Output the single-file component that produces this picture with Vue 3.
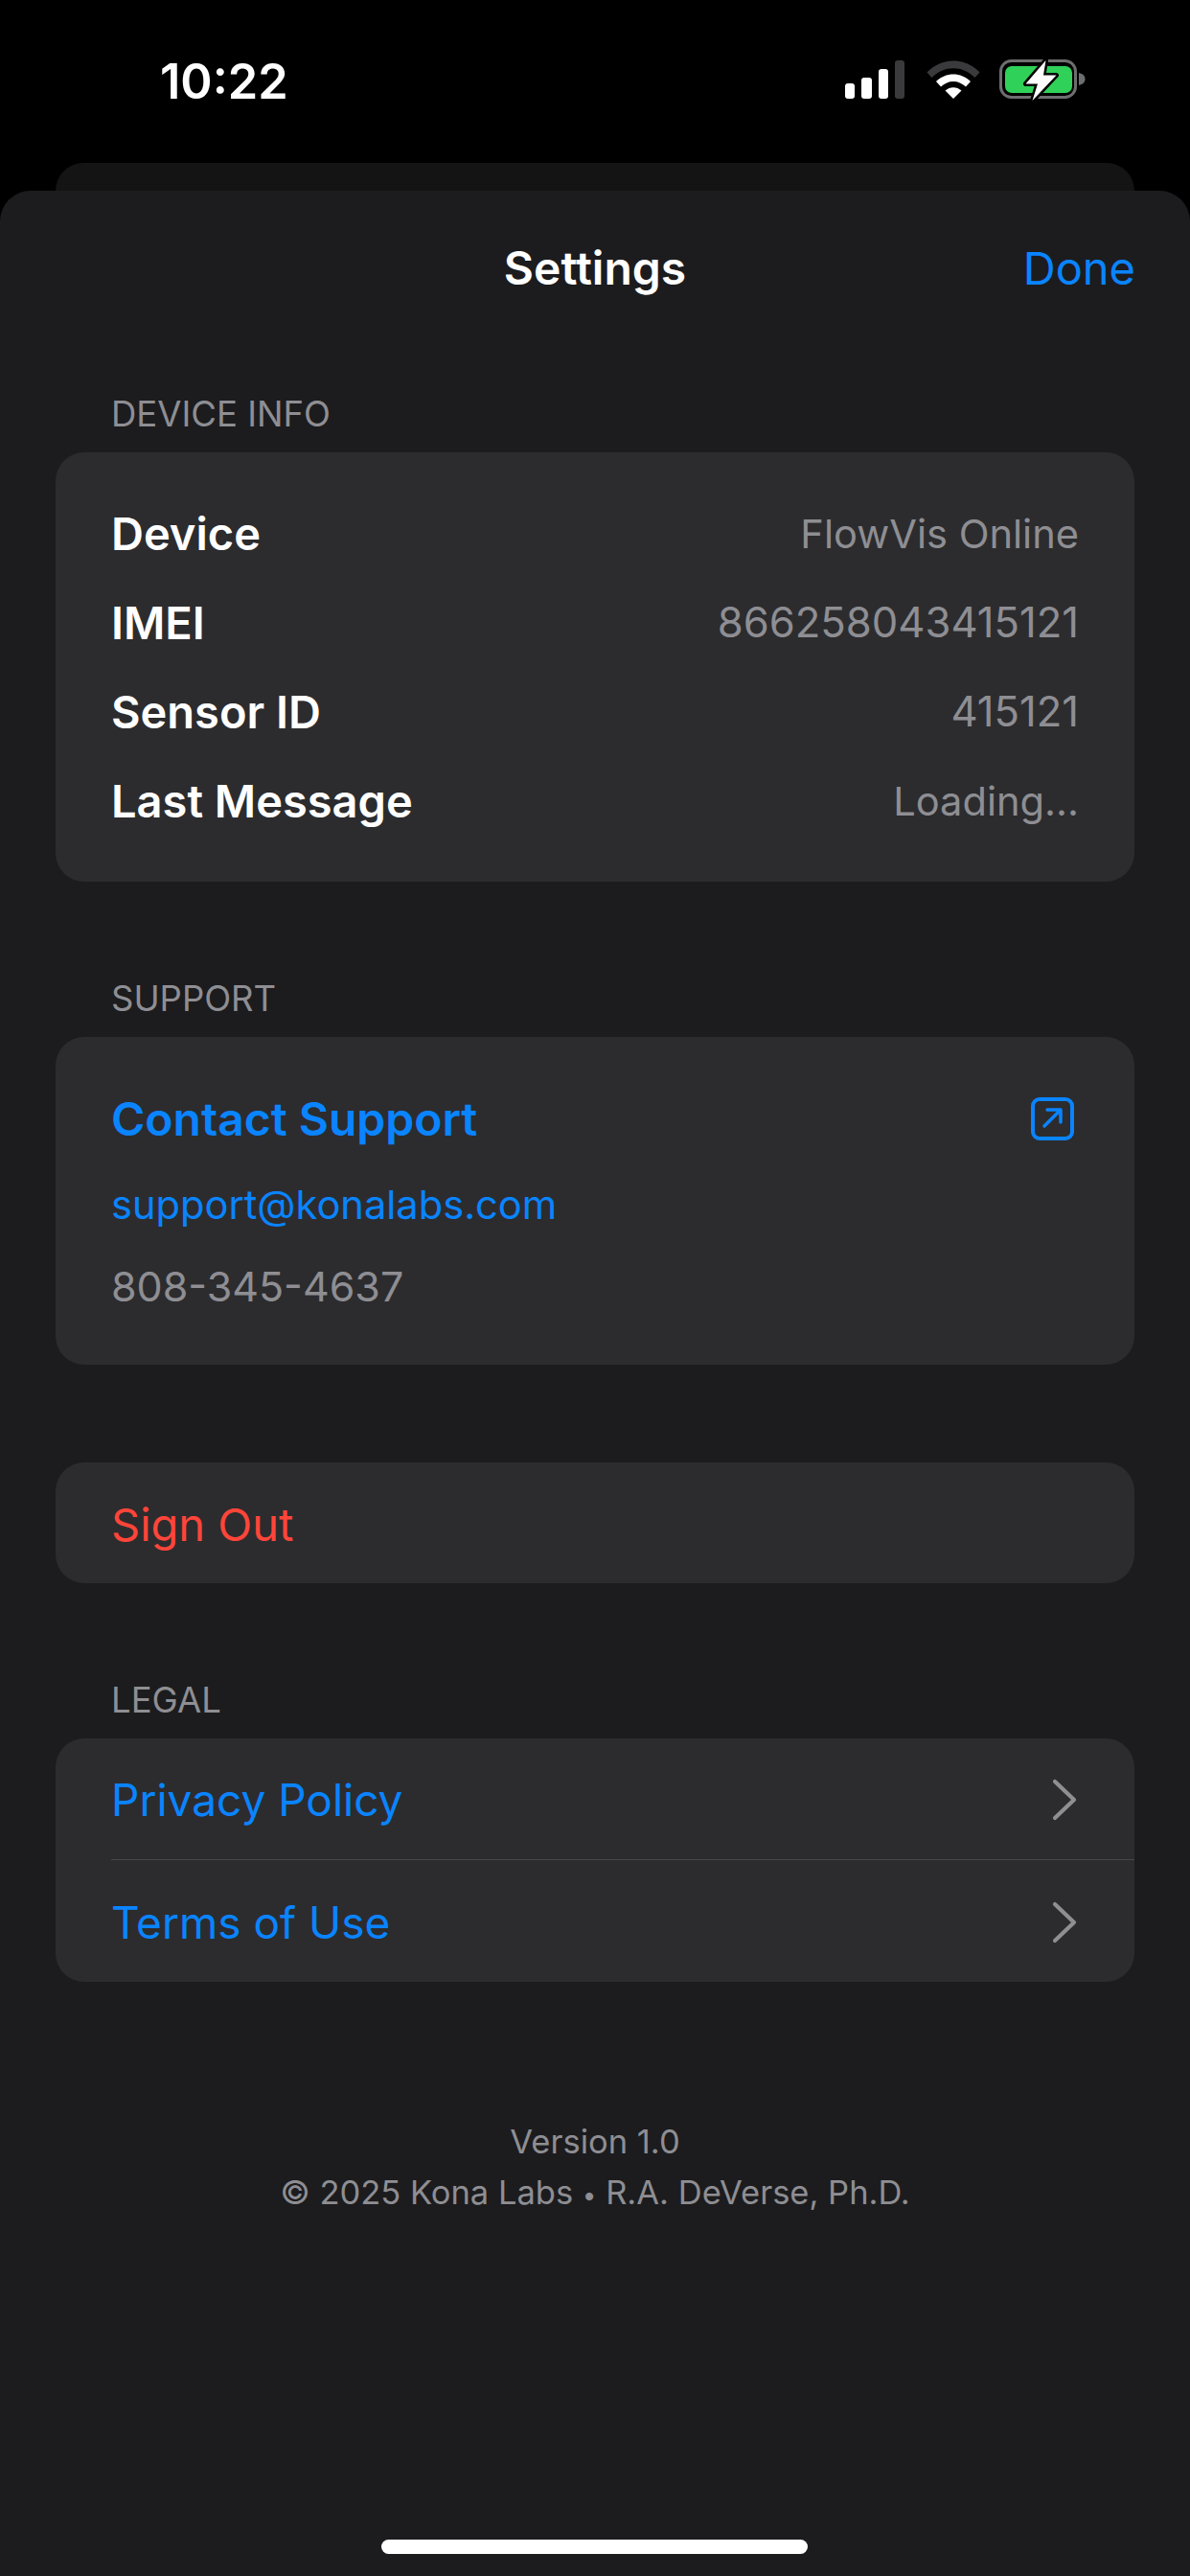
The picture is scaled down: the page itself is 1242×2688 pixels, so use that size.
<template>
  <div class="screen">
    <div class="status-bar">
      <span class="time">10:22</span>
      <div class="status-icons">
        <svg class="signal" width="62" height="40" viewBox="0 0 62 40">
          <rect x="0" y="24" width="10" height="16" rx="3" fill="#fff" />
          <rect x="17" y="18" width="11" height="22" rx="3" fill="#fff" />
          <rect x="35" y="9" width="10" height="31" rx="3" fill="#fff" />
          <rect x="52" y="0" width="10" height="40" rx="3" fill="#3a3a3c" />
        </svg>
        <svg class="wifi" width="56" height="40" viewBox="0 0 56 40">
          <path d="M0.5 12.5 C16 -3.5 40 -3.5 55.5 12.5 L50.5 18 C37.5 5 18.5 5 5.5 18 Z" fill="#3a3a3c" />
          <path d="M10 22 C20 12 36 12 46 22 L41 27.5 C33.5 20 22.5 20 15 27.5 Z" fill="#fff" />
          <path d="M19.5 31.5 C24.5 27 31.5 27 36.5 31.5 L28 40 Z" fill="#fff" />
        </svg>
        <svg class="battery" width="90" height="44" viewBox="0 0 90 44">
          <rect x="1.5" y="1.5" width="78" height="38" rx="11" fill="none" stroke="#6e6e70" stroke-width="3" />
          <rect x="6" y="7" width="70" height="28" rx="7" fill="#30d158" />
          <path d="M83 14 C87 15 89.5 17 89.5 20.5 C89.5 24 87 26 83 27 Z" fill="#6e6e70" />
          <path d="M48.5 1 L27.5 25.5 L40 25.5 L34.5 43 L59.5 16.5 L46 16.5 Z" fill="#fff" stroke="#000" stroke-width="5" stroke-linejoin="round" paint-order="stroke" />
        </svg>
      </div>
    </div>

    <div class="back-card"></div>

    <div class="sheet">
      <header class="nav">
        <span class="nav-title">Settings</span>
        <span class="nav-done">Done</span>
      </header>

      <h2 class="section-label">DEVICE INFO</h2>
      <section class="card info-card">
        <div v-for="row in infoRows" :key="row.label" class="info-row">
          <span class="info-label">{{ row.label }}</span>
          <span :class="['info-value', { numeric: row.numeric }]">{{ row.value }}</span>
        </div>
      </section>

      <h2 class="section-label spaced">SUPPORT</h2>
      <section class="card support-card">
        <div class="support-head">
          <span class="support-title">Contact Support</span>
          <svg class="open-icon" width="45" height="45" viewBox="0 0 45 45" fill="none" stroke="#0a84ff" stroke-linecap="round" stroke-linejoin="round">
            <rect x="2" y="2" width="41" height="41" rx="7" stroke-width="4" />
            <path d="M14 30 L31 13 M17 13 L31 13 L31 26" stroke-width="3.5" />
          </svg>
        </div>
        <a class="support-mail">support@konalabs.com</a>
        <span class="support-phone">808-345-4637</span>
      </section>

      <section class="card signout-card">
        <span class="signout">Sign Out</span>
      </section>

      <h2 class="section-label spaced">LEGAL</h2>
      <section class="card legal-card">
        <div v-for="item in legalItems" :key="item" class="legal-row">
          <span class="legal-link">{{ item }}</span>
          <svg width="26" height="44" viewBox="0 0 26 44" fill="none" stroke="#8e8e93" stroke-width="4.2" stroke-linecap="round" stroke-linejoin="round">
            <path d="M3 3 L23 22 L3 41" />
          </svg>
        </div>
      </section>

      <footer class="about">
        <p>Version 1.0</p>
        <p>© 2025 Kona Labs <span class="dot">•</span> R.A. DeVerse, Ph.D.</p>
      </footer>

      <div class="home-indicator"></div>
    </div>
  </div>
</template>

<script setup>
const infoRows = [
  { label: 'Device', value: 'FlowVis Online' },
  { label: 'IMEI', value: '866258043415121', numeric: true },
  { label: 'Sensor ID', value: '415121', numeric: true },
  { label: 'Last Message', value: 'Loading...' },
];

const legalItems = ['Privacy Policy', 'Terms of Use'];
</script>

<style>
html,
body {
  margin: 0;
  background: #000;
}
</style>

<style scoped>
.screen {
  width: 1242px;
  height: 2688px;
  overflow: hidden;
  display: flex;
  flex-direction: column;
  background: #000;
  color: #fff;
  font-family: Inter, "Liberation Sans", sans-serif;
}

.status-bar {
  height: 170px;
  flex: none;
  display: flex;
  align-items: flex-start;
  justify-content: space-between;
  padding: 0 109px 0 167px;
  box-sizing: border-box;
}

.time {
  margin-top: 55px;
  font-size: 50.5px;
  line-height: 60px;
  font-weight: 600;
}

.status-icons {
  display: flex;
  align-items: flex-start;
  margin-top: 62px;
}

.signal {
  margin-top: 1px;
}

.wifi {
  margin: 1px 20px 0 23px;
}

.back-card {
  flex: none;
  height: 29px;
  margin: 0 58px;
  background: #141415;
  border-radius: 30px 30px 0 0;
}

.sheet {
  position: relative;
  flex: 1;
  padding: 0 58px;
  background: #1c1c1e;
  border-radius: 32px 32px 0 0;
}

.nav {
  display: flex;
  justify-content: flex-end;
  position: relative;
  height: 164px;
  padding-top: 51px;
  box-sizing: border-box;
}

.nav-title {
  position: absolute;
  left: 0;
  right: 0;
  text-align: center;
  font-size: 48px;
  line-height: 60px;
  font-weight: 600;
}

.nav-done {
  margin-right: -1px;
  font-size: 47px;
  line-height: 60px;
  color: #0a84ff;
}

.section-label {
  margin: 0;
  height: 109px;
  padding: 48px 0 0 58px;
  box-sizing: border-box;
  font-size: 36.5px;
  line-height: 42px;
  font-weight: 400;
  color: #8e8e93;
}

.section-label.spaced {
  margin-top: 53px;
}

.card {
  background: #2c2c2e;
  border-radius: 30px;
}

.info-card {
  height: 448px;
  padding: 38px 58px 24px;
  box-sizing: border-box;
}

.info-row {
  display: flex;
  justify-content: space-between;
  align-items: center;
  height: 93px;
}

.info-label {
  font-size: 47px;
  font-weight: 600;
}

.info-value {
  font-size: 41.6px;
  color: #8e8e93;
}

.info-value.numeric {
  font-size: 43.6px;
}

.support-card {
  height: 342px;
  padding: 55px 58px 0;
  box-sizing: border-box;
  display: flex;
  flex-direction: column;
  align-items: flex-start;
}

.support-head {
  width: 100%;
  height: 60px;
  display: flex;
  justify-content: space-between;
  align-items: center;
}

.support-title {
  font-size: 48px;
  font-weight: 600;
  color: #0a84ff;
}

.open-icon {
  margin-right: 5px;
}

.support-mail {
  margin-top: 34px;
  font-size: 41.6px;
  line-height: 52px;
  color: #0a84ff;
}

.support-phone {
  margin-top: 33px;
  font-size: 43px;
  line-height: 52px;
  color: #8e8e93;
}

.signout-card {
  height: 126px;
  margin: 102px 0 1px;
  padding: 2px 58px 0;
  box-sizing: border-box;
  display: flex;
  align-items: center;
}

.signout {
  font-size: 47px;
  color: #ff453a;
}

.legal-card {
  height: 254px;
}

.legal-row {
  height: 126px;
  margin-left: 58px;
  padding: 2px 60px 0 0;
  box-sizing: border-box;
  display: flex;
  justify-content: space-between;
  align-items: center;
}

.legal-row + .legal-row {
  height: 128px;
  border-top: 1px solid #48484a;
}

.legal-link {
  font-size: 46px;
  color: #0a84ff;
}

.about {
  margin-top: 146px;
  text-align: center;
  font-size: 34.5px;
  color: #8e8e93;
}

.about p {
  margin: 0 0 11px;
  line-height: 42px;
}

.dot {
  font-size: 26px;
}

.home-indicator {
  position: absolute;
  left: 398px;
  bottom: 23px;
  width: 445px;
  height: 15px;
  border-radius: 8px;
  background: #fff;
}
</style>
